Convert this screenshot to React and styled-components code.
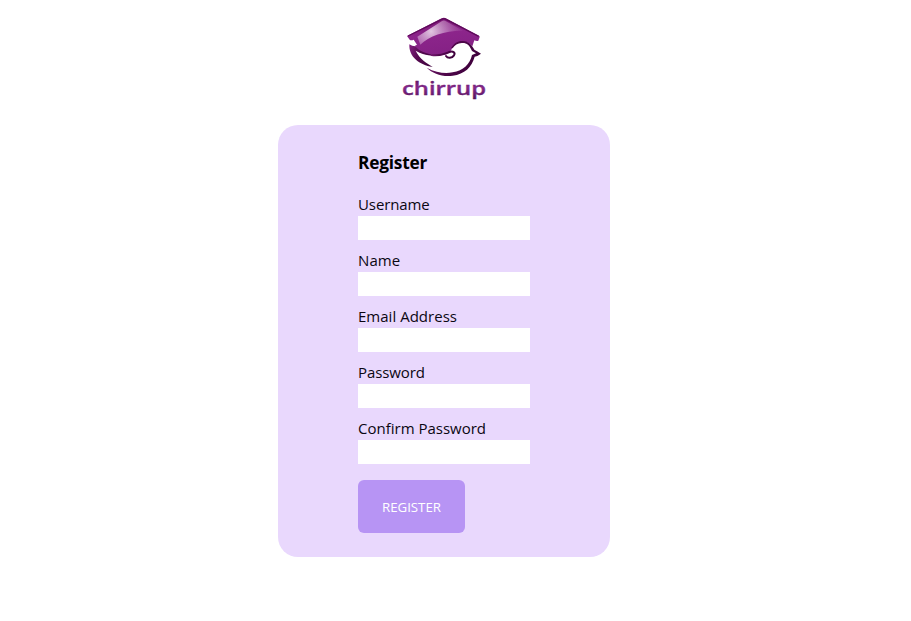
import React from "react";
import styled, { createGlobalStyle } from "styled-components";

const GlobalStyle = createGlobalStyle`
  body {
    margin: 0;
    background: #fff;
    color: #0b0712;
    font-family: "Open Sans", "Noto Sans", sans-serif;
  }
`;

const Page = styled.main`
  width: 888px;
  display: flex;
  flex-direction: column;
  align-items: center;
`;

const Logo = styled.svg`
  display: block;
  width: 100px;
  height: 95px;
  margin: 10px 0 20px 2px;
`;

const Card = styled.form`
  box-sizing: border-box;
  width: 332px;
  height: 432px;
  padding: 24px 80px;
  border-radius: 20px;
  background: #e9d8fd;
  display: flex;
  flex-direction: column;
  align-items: flex-start;
`;

const Title = styled.h1`
  margin: 0 0 17px;
  font-size: 17.3px;
  line-height: 28px;
  height: 27px;
  font-weight: 700;
  letter-spacing: -0.2px;
  color: #000;
`;

const Field = styled.label`
  display: flex;
  flex-direction: column;
  height: 56px;
`;

const FieldName = styled.span`
  height: 23px;
  line-height: 23px;
  font-size: 15px;
  letter-spacing: ${(p) => p.$spacing};
  white-space: nowrap;
`;

const Input = styled.input`
  box-sizing: border-box;
  width: 172px;
  height: 24px;
  padding: 2px 6px;
  border: 0;
  outline: 0;
  background: #fff;
`;

const Submit = styled.button`
  width: 107px;
  height: 53px;
  margin-top: 7px;
  padding: 0;
  border: 0;
  border-radius: 6px;
  background: #b794f4;
  color: #fff;
  font: 400 13.3px "Open Sans", "Noto Sans", sans-serif;
  letter-spacing: -0.05px;
`;

const fields = [
  { label: "Username", type: "text", spacing: "-0.1px" },
  { label: "Name", type: "text", spacing: "0.1px" },
  { label: "Email Address", type: "text", spacing: "0.02px" },
  { label: "Password", type: "password", spacing: "-0.1px" },
  { label: "Confirm Password", type: "password", spacing: "0px" },
];

function ChirrupLogo() {
  return (
    <Logo viewBox="0 0 300 285" role="img" aria-label="chirrup">
      <defs>
        <linearGradient id="roof" x1="0" y1="0" x2="0.25" y2="1">
          <stop offset="0" stopColor="#78136f" />
          <stop offset="0.5" stopColor="#8c258b" />
          <stop offset="1" stopColor="#852185" />
        </linearGradient>
        <radialGradient id="shine" gradientUnits="userSpaceOnUse" cx="108" cy="64" r="100">
          <stop offset="0" stopColor="#fff" stopOpacity="0.75" />
          <stop offset="0.5" stopColor="#e8c9e8" stopOpacity="0.42" />
          <stop offset="1" stopColor="#c080c0" stopOpacity="0.08" />
        </radialGradient>
        <linearGradient id="bird" x1="0" y1="0" x2="1" y2="0.3">
          <stop offset="0" stopColor="#822080" />
          <stop offset="0.45" stopColor="#54094f" />
          <stop offset="1" stopColor="#3e003b" />
        </linearGradient>
        <linearGradient id="word" x1="0" y1="0" x2="0" y2="1">
          <stop offset="0" stopColor="#4d0b51" />
          <stop offset="0.5" stopColor="#84288a" />
          <stop offset="1" stopColor="#52105a" />
        </linearGradient>
      </defs>
      <path
        fill="url(#roof)"
        d="M140 25 Q147 21 155 26 L252 77 Q256 80 253 84 L250 92 Q246 95 238 91 L232 109 Q220 95 203 96 Q181 98 171 115 C165 133 151 138 125 136 C98 136 76 132 62 116 L60 107 L66 104 L56 89 Q48 93 44 89 L36 78Z"
      />
      <path fill="url(#shine)" d="M140 34 Q147 29 153 34 L204 62 C152 61 102 77 76 104 L67 80Z" />
      <path fill="none" stroke="#5f0b5b" strokeWidth="4" d="M39 78 L140 28 Q147 24 155 29 L251 79" />
      <path fill="url(#bird)" d="M43 103 Q51 109 61 109 C72 124 95 134 128 135 C108 139 80 134 62 122 C75 148 95 159 113 171 C73 165 41 141 43 103Z" />
      <path
        fill="none"
        stroke="url(#bird)"
        strokeWidth="6"
        strokeLinecap="round"
        d="M110 135 C137 138 150 131 163 126 C174 122 182 128 177 136 C171 145 158 146 153 138"
      />
      <path
        fill="url(#bird)"
        d="M168 115 C177 99 190 92 204 93 C220 94 231 105 238 119 Q247 124 258 131 Q248 139 239 140 C230 172 209 192 173 197 C142 201 113 191 95 173 C124 188 150 192 173 187 C205 183 225 161 231 135 L243 130 L231 123 C223 105 216 99 203 99 C189 98 179 105 173 115Z"
      />
      <text
        x="21"
        y="254"
        textLength="252"
        lengthAdjust="spacingAndGlyphs"
        fill="url(#word)"
        stroke="url(#word)"
        strokeWidth="1"
        fontFamily="Open Sans, Noto Sans, sans-serif"
        fontSize="52"
        fontWeight="600"
      >
        chirrup
      </text>
    </Logo>
  );
}

export default function App() {
  return (
    <>
      <GlobalStyle />
      <Page>
        <ChirrupLogo />
        <Card onSubmit={(e) => e.preventDefault()}>
          <Title>Register</Title>
          {fields.map((f) => (
            <Field key={f.label}>
              <FieldName $spacing={f.spacing}>{f.label}</FieldName>
              <Input type={f.type} />
            </Field>
          ))}
          <Submit type="submit">REGISTER</Submit>
        </Card>
      </Page>
    </>
  );
}
